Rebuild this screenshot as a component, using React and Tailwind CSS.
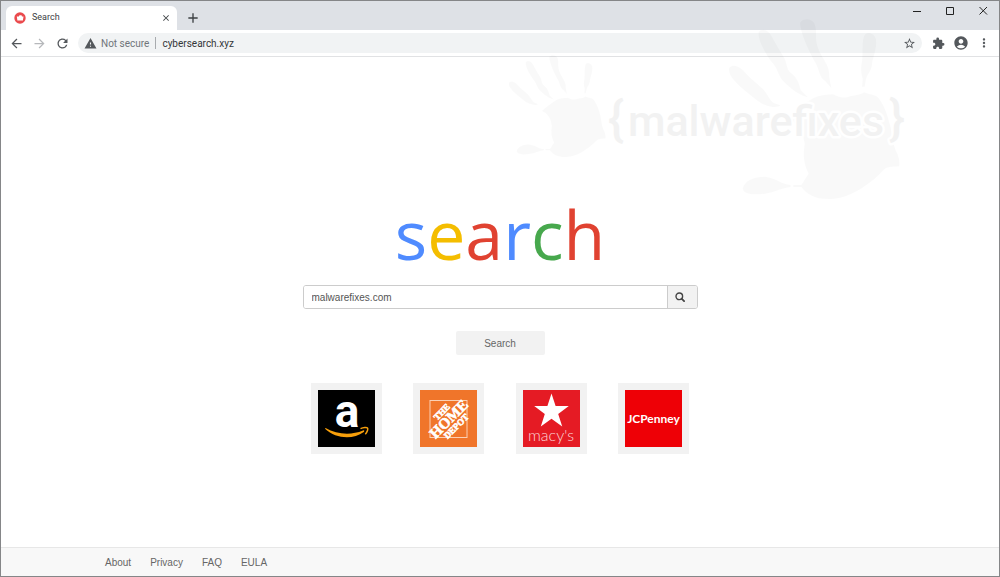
import React, { useState } from 'react';
import {
    MdAccountCircle,
    MdAdd,
    MdArrowBack,
    MdArrowForward,
    MdClose,
    MdExtension,
    MdMoreVert,
    MdRefresh,
    MdStarBorder,
    MdWarning
} from 'react-icons/md';

const footerLinks = ['About', 'Privacy', 'FAQ', 'EULA'];

const shops = [
    { name: 'Amazon', Logo: AmazonLogo },
    { name: 'The Home Depot', Logo: HomeDepotLogo },
    { name: "Macy's", Logo: MacysLogo },
    { name: 'JCPenney', Logo: JCPenneyLogo }
];

export default function App() {
    return (
        <div className="relative flex min-h-screen flex-col overflow-hidden border border-[#858688] bg-white font-['Liberation_Sans',sans-serif] text-[10px] text-[#666]">
            <TabStrip />
            <Toolbar />
            <SearchPage />
            <Watermark />
        </div>
    );
}

function TabStrip() {
    return (
        <div className="flex h-[29px] items-start bg-[#dee1e6] pl-[5px] font-['Roboto',sans-serif] text-[#3c4043]">
            <div className="mt-[5px] flex h-6 w-[171px] items-center rounded-t-md bg-white pr-1.5 pl-2">
                <TabIcon />
                <span className="ml-1.5 flex-1 text-[9px]">Search</span>
                <button type="button" aria-label="Close tab">
                    <MdClose className="size-2.5" />
                </button>
            </div>
            <button type="button" aria-label="New tab" className="mt-[9px] ml-2">
                <MdAdd className="size-4" />
            </button>

            {/* Window buttons */}
            <div className="ml-auto flex gap-[23px] pt-1 pr-[11px] text-[#222]">
                <button type="button" aria-label="Minimize">
                    <svg viewBox="0 0 10 10" className="size-2.5"><path d="M1 6.5h8" stroke="currentColor" /></svg>
                </button>
                <button type="button" aria-label="Maximize">
                    <svg viewBox="0 0 10 10" className="size-2.5"><path d="M1.5 2.5h7v7h-7z" fill="none" stroke="currentColor" /></svg>
                </button>
                <button type="button" aria-label="Close">
                    <svg viewBox="0 0 10 10" className="size-2.5"><path d="M1.5 2l7.500 7.500m0-7.500l-7.500 7.500" stroke="currentColor" /></svg>
                </button>
            </div>
        </div>
    );
}

function TabIcon() {
    return (
        <svg viewBox="0 0 12 12" className="size-3" aria-hidden="true">
            <circle cx="6" cy="6" r="5.7" fill="#ea4a4d" />
            <path d="M2.800 4.500h2l.7-1.200h2l.5 1.200h1.500l-.6 4H3.400z" fill="#fff" />
        </svg>
    );
}

function Toolbar() {
    return (
        <div className="flex h-[27px] items-center border-b border-[#e1e2e4] px-2 font-['Roboto',sans-serif] text-[#54585c]">
            <button type="button" aria-label="Back"><MdArrowBack className="size-[15px]" /></button>
            <button type="button" aria-label="Forward" className="ml-2 text-[#b6b8bb]"><MdArrowForward className="size-[15px]" /></button>
            <button type="button" aria-label="Reload" className="ml-2"><MdRefresh className="size-[15px]" /></button>

            <div className="ml-2 flex h-5 flex-1 items-center rounded-full bg-[#f1f3f4] px-1.5">
                {/* Solid triangle with the mark cut out */}
                <svg viewBox="0 0 24 24" className="size-[13px]" fill="currentColor" aria-hidden="true">
                    <path d="M1 21h22L12 2 1 21zm12-3h-2v-2h2v2zm0-4h-2v-4h2v4z" />
                </svg>
                <span className="ml-1 text-[10px] text-[#70757a]">Not secure</span>
                <span className="mx-1.5 h-3 w-px bg-[#a8abae]"></span>
                <input
                    type="text"
                    aria-label="Address"
                    defaultValue="cybersearch.xyz"
                    className="min-w-0 flex-1 bg-transparent text-[10px] text-[#333639] outline-none"
                />
                <button type="button" aria-label="Bookmark"><MdStarBorder className="size-[13px]" /></button>
            </div>

            <button type="button" aria-label="Extensions" className="ml-2.5"><MdExtension className="size-[13px]" /></button>
            <button type="button" aria-label="Profile" className="ml-2"><MdAccountCircle className="size-4" /></button>
            <button type="button" aria-label="Menu" className="ml-2"><MdMoreVert className="size-[14px]" /></button>
        </div>
    );
}

function SearchPage() {
    const [query, setQuery] = useState('malwarefixes.com');

    return (
        <>
            <main className="flex flex-1 flex-col items-center pt-[137px]">
                <h1 className="font-['Open_Sans',sans-serif] text-[68px] leading-[80px] font-medium">
                    <span className="text-[#4f8bff]">s</span>
                    <span className="text-[#f4bd00]">e</span>
                    <span className="text-[#e04231]">a</span>
                    <span className="text-[#4f8bff]">r</span>
                    <span className="text-[#47a84d]">c</span>
                    <span className="text-[#e04231]">h</span>
                </h1>

                <form onSubmit={(e) => e.preventDefault()} className="mt-[11px] flex w-full max-w-[395px] flex-col items-center">
                    <div className="flex h-6 w-full overflow-hidden rounded-[3px] border border-[#ccc]">
                        <input
                            type="text"
                            aria-label="Search the web"
                            value={query}
                            onChange={(e) => setQuery(e.target.value)}
                            className="min-w-0 flex-1 bg-white px-2 text-[10px] text-[#555] outline-none"
                        />
                        <button type="submit" aria-label="Submit" className="flex w-[30px] items-center justify-center border-l border-[#ccc] bg-[#f2f2f2] pr-1 text-[#444]">
                            <svg viewBox="0 0 10 10" className="size-2.5" fill="none" stroke="currentColor" strokeWidth="1.4">
                                <circle cx="4.300" cy="4.300" r="3.300" />
                                <path d="M6.600 6.600l2.500 2.500" strokeWidth="1.800" strokeLinecap="round" />
                            </svg>
                        </button>
                    </div>
                    <button type="submit" className="mt-[22px] h-6 w-[89px] rounded-xs bg-[#f2f2f2]">Search</button>
                </form>

                <div className="mt-[28px] flex w-full max-w-[378px] justify-between">
                    {shops.map(({ name, Logo }) => (
                        <a key={name} href="#" aria-label={name} className="bg-[#f2f2f2] p-[7px]">
                            <Logo />
                        </a>
                    ))}
                </div>
            </main>

            <footer className="flex h-[29px] items-center gap-[19px] border-t border-[#e7e7e7] bg-[#f8f8f8] pl-[104px]">
                {footerLinks.map((label) => (
                    <a key={label} href="#">{label}</a>
                ))}
            </footer>
        </>
    );
}

function AmazonLogo() {
    return (
        <svg viewBox="0 0 57 57" className="size-[57px] overflow-visible bg-black">
            <text x="29" y="37" textAnchor="middle" fill="#fff" className="font-['Roboto',sans-serif] text-[46px] font-bold">a</text>
            <path d="M7.500 38C19 44.500 33 45.500 45 40.500c1.200-.5 1.800.6.8 1.400C35 50 18 49 7 38.800z" fill="#f79f0b" />
            <path d="M42.500 38.700c3-1.500 6.300-1.500 7-.7s0 4-2.200 6.200" fill="none" stroke="#f79f0b" strokeWidth="1.500" />
        </svg>
    );
}

function HomeDepotLogo() {
    return (
        <svg viewBox="0 0 57 57" className="size-[57px] bg-[#f0752a]">
            <rect x="10" y="10.500" width="37" height="37" fill="none" stroke="#fbd0b4" />
            <g
                transform="rotate(-45 28.500 28.500)"
                fill="#fff"
                stroke="#fff"
                strokeWidth="0.600"
                textAnchor="middle"
                className="font-['Liberation_Serif',serif] font-bold"
            >
                <text x="28.500" y="22" className="text-[9px]">THE</text>
                <text x="28.500" y="34" className="text-[15px]">HOME</text>
                <text x="28.500" y="42.500" className="text-[9px]">DEPOT</text>
            </g>
        </svg>
    );
}

function MacysLogo() {
    return (
        <svg viewBox="0 0 57 57" className="size-[57px] bg-[#e51b24]">
            <path d="M28.500 3.500l4.100 12.600h13.200L35.200 23.900l4 12.500-10.700-7.700-10.700 7.700 4-12.500-10.600-7.800h13.200z" fill="#fff" />
            <text x="28" y="51" textAnchor="middle" fill="#fbd5d6" className="font-['Lato',sans-serif] text-[16px] font-light">macy's</text>
        </svg>
    );
}

function JCPenneyLogo() {
    return (
        <svg viewBox="0 0 57 57" className="size-[57px] bg-[#ee0006]">
            <text x="28.500" y="33" textAnchor="middle" fill="#fff" className="font-['Lato',sans-serif] text-[12px] font-bold">JCPenney</text>
        </svg>
    );
}

// Faint handprints and site name that lie over the whole window
function Watermark() {
    return (
        <svg
            viewBox="508 0 400 210"
            aria-hidden="true"
            className="pointer-events-none absolute top-0 right-[91px] h-[210px] w-[400px] overflow-visible"
        >
            <g transform="translate(503.800 52.300) scale(.189)"><Hand /></g>
            <g transform="translate(720 15) scale(.3333)"><Hand /></g>
            <g
                fill="#f2f2f2"
                stroke="#fff"
                strokeWidth="5"
                strokeLinejoin="round"
                paintOrder="stroke"
                textAnchor="middle"
                className="font-['Roboto',sans-serif] font-medium"
            >
                <text x="616" y="134" className="text-[48px]">{'{'}</text>
                <text x="756" y="135" className="text-[43px]">malwarefixes</text>
                <text x="897" y="134" className="text-[48px]">{'}'}</text>
            </g>
        </svg>
    );
}

function Hand() {
    return (
        <g fill="#000" fillOpacity="0.022">
            <path d="M28 155c12-12 32-3 48 15 20 22 34 30 52 48 14 14 20 34 35 44l18 6c-6 8-28 6-48-2-18-8-38-26-58-42-26-22-54-48-47-69z" />
            <path d="M116 48c10-12 28-8 40 14 12 24 26 44 38 66 8 16 4 30 20 44 20 16 24 34 28 50l22 22c-22-4-50-24-72-46-18-18-18-38-32-54-22-26-48-74-44-96z" />
            <path d="M240 20c8-14 36-14 44 4 8 20 2 36 6 56 4 22 14 36 24 54 10 16 16 34 14 50l6 32-18-20c-20-14-18-36-30-56-14-24-44-84-46-120z" />
            <path d="M434 56c8-10 30-6 34 14 4 30-10 54-12 76-2 20-16 32-18 44l-4 22h-8l2-24c-6-18-6-34-2-52 4-28-2-62 8-80z" />
            <path d="M282 245c15-6 35-10 58-10 15 8 30 14 50 6 20-4 30-4 42-12 16 8 38 6 46 20 20 28 26 56 34 84 4 30 8 54 16 72 8 14 12 30 10 46-18 2-38-2-52 16-38 40-100 80-152 82-50 2-74-14-90-36h-24v-6h24c8-14 14-22 22-34-14-26-18-54-12-88-4-36-18-66-52-80 20-18 50-42 80-60z" />
            <path d="M68 518c6-26 36-36 68-36 34 4 40 20 76 25v6c-24 2-48 16-76 20-28 4-64 4-68-15z" />
        </g>
    );
}
